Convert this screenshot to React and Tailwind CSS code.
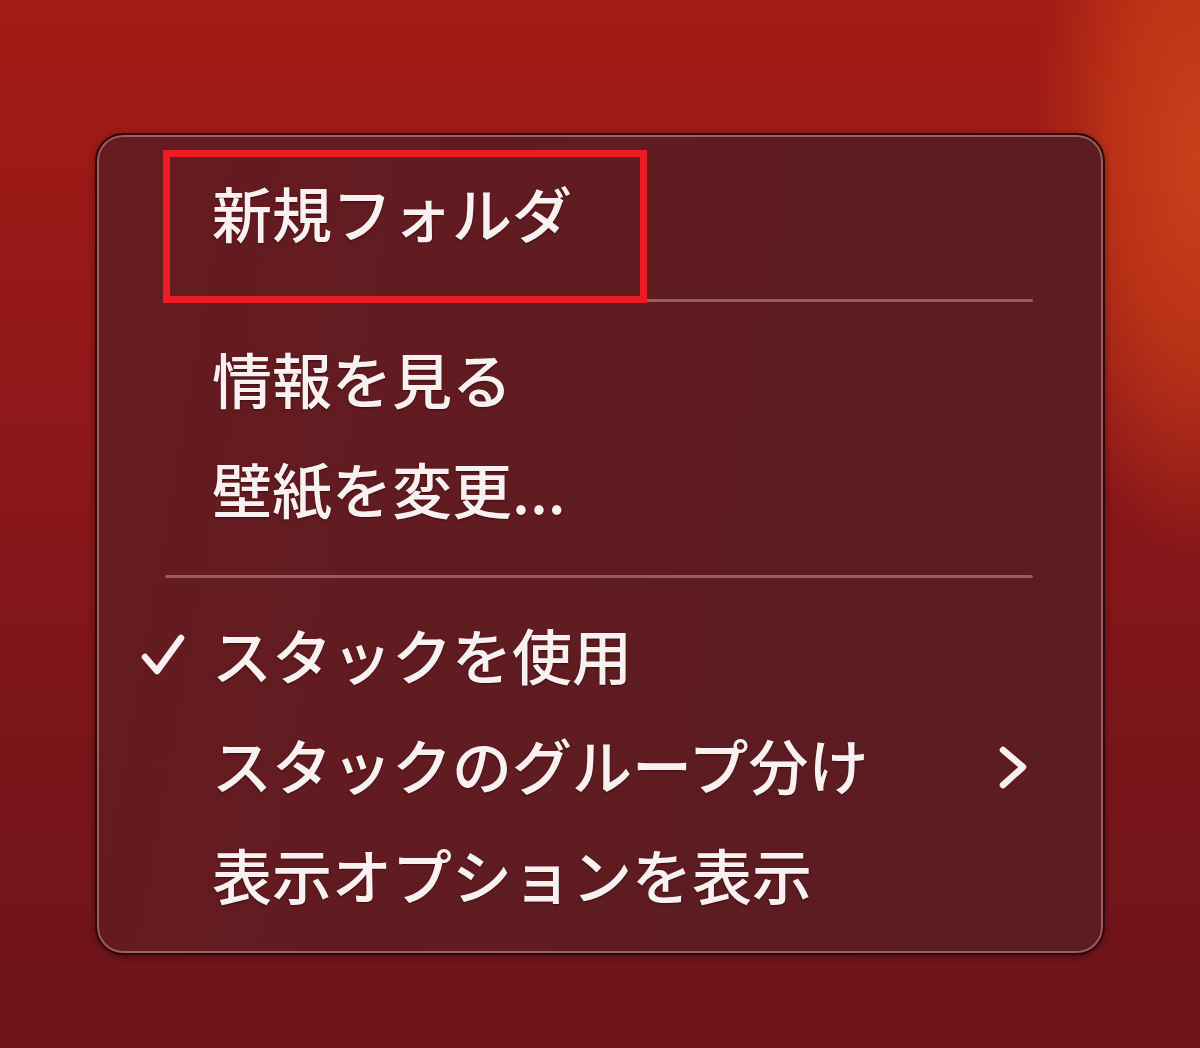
import { Fragment } from 'react'

const items = [
  { label: '新規フォルダ' },
  'sep',
  { label: '情報を見る' },
  { label: '壁紙を変更...' },
  'sep',
  { label: 'スタックを使用', checked: true },
  { label: 'スタックのグループ分け', submenu: true },
  { label: '表示オプションを表示' },
]

function Check() {
  return (
    <svg width="46" height="46" viewBox="0 0 46 46" fill="none">
      <path
        d="M4 24 L16 38 L40 5"
        stroke="#f7eff1"
        strokeWidth="6.5"
        strokeLinecap="round"
        strokeLinejoin="round"
      />
    </svg>
  )
}

function Chevron() {
  return (
    <svg width="34" height="50" viewBox="0 0 34 50" fill="none">
      <path
        d="M6 6 L26 23 L6 41"
        stroke="#f7eff1"
        strokeWidth="6.5"
        strokeLinecap="round"
        strokeLinejoin="round"
      />
    </svg>
  )
}

function MenuItem({ label, checked, submenu }) {
  return (
    <div className="flex h-[110px] items-center pl-[44px] pr-[72px]">
      <div className="flex w-[71px] items-center pb-[6px]">{checked && <Check />}</div>
      <span className="flex-1 pb-[10px] text-[60px] font-medium leading-none text-[#f8f1f2] [text-shadow:0_1px_2px_rgba(40,0,0,0.6)]">
        {label}
      </span>
      {submenu && <Chevron />}
    </div>
  )
}

export default function App() {
  return (
    <div
      className="relative h-[1048px] w-full overflow-hidden bg-[radial-gradient(ellipse_14%_38%_at_100%_15%,#c8401a_0%,rgba(196,58,22,0.75)_50%,transparent_100%),linear-gradient(180deg,#a31b15_0%,#921819_35%,#7a1519_70%,#6c141a_100%)] pl-[95px] pt-[133px]"
      style={{ fontFamily: '"Noto Sans CJK JP", "Noto Sans", sans-serif' }}
    >
      <div className="w-[1010px] rounded-[28px] border-2 border-[#2c090c] bg-[linear-gradient(100deg,#661b20_0%,#5f1c21_50%,#5a1c22_100%)] pb-[19px] pt-[27px] shadow-[inset_0_0_0_2px_rgba(240,170,175,0.45),0_2px_6px_rgba(30,0,0,0.4)]">
        {items.map((it, i) =>
          it === 'sep' ? (
            <div key={i} className="flex h-[56px] items-center pl-[68px] pr-[70px]">
              <div className="h-[3px] w-full rounded-full bg-[#9a5b60]" />
            </div>
          ) : (
            <Fragment key={i}>
              <MenuItem {...it} />
            </Fragment>
          )
        )}
      </div>

      <div className="absolute left-[163px] top-[150px] h-[153px] w-[484px] border-[7px] border-[#ec1c24]" />
    </div>
  )
}
